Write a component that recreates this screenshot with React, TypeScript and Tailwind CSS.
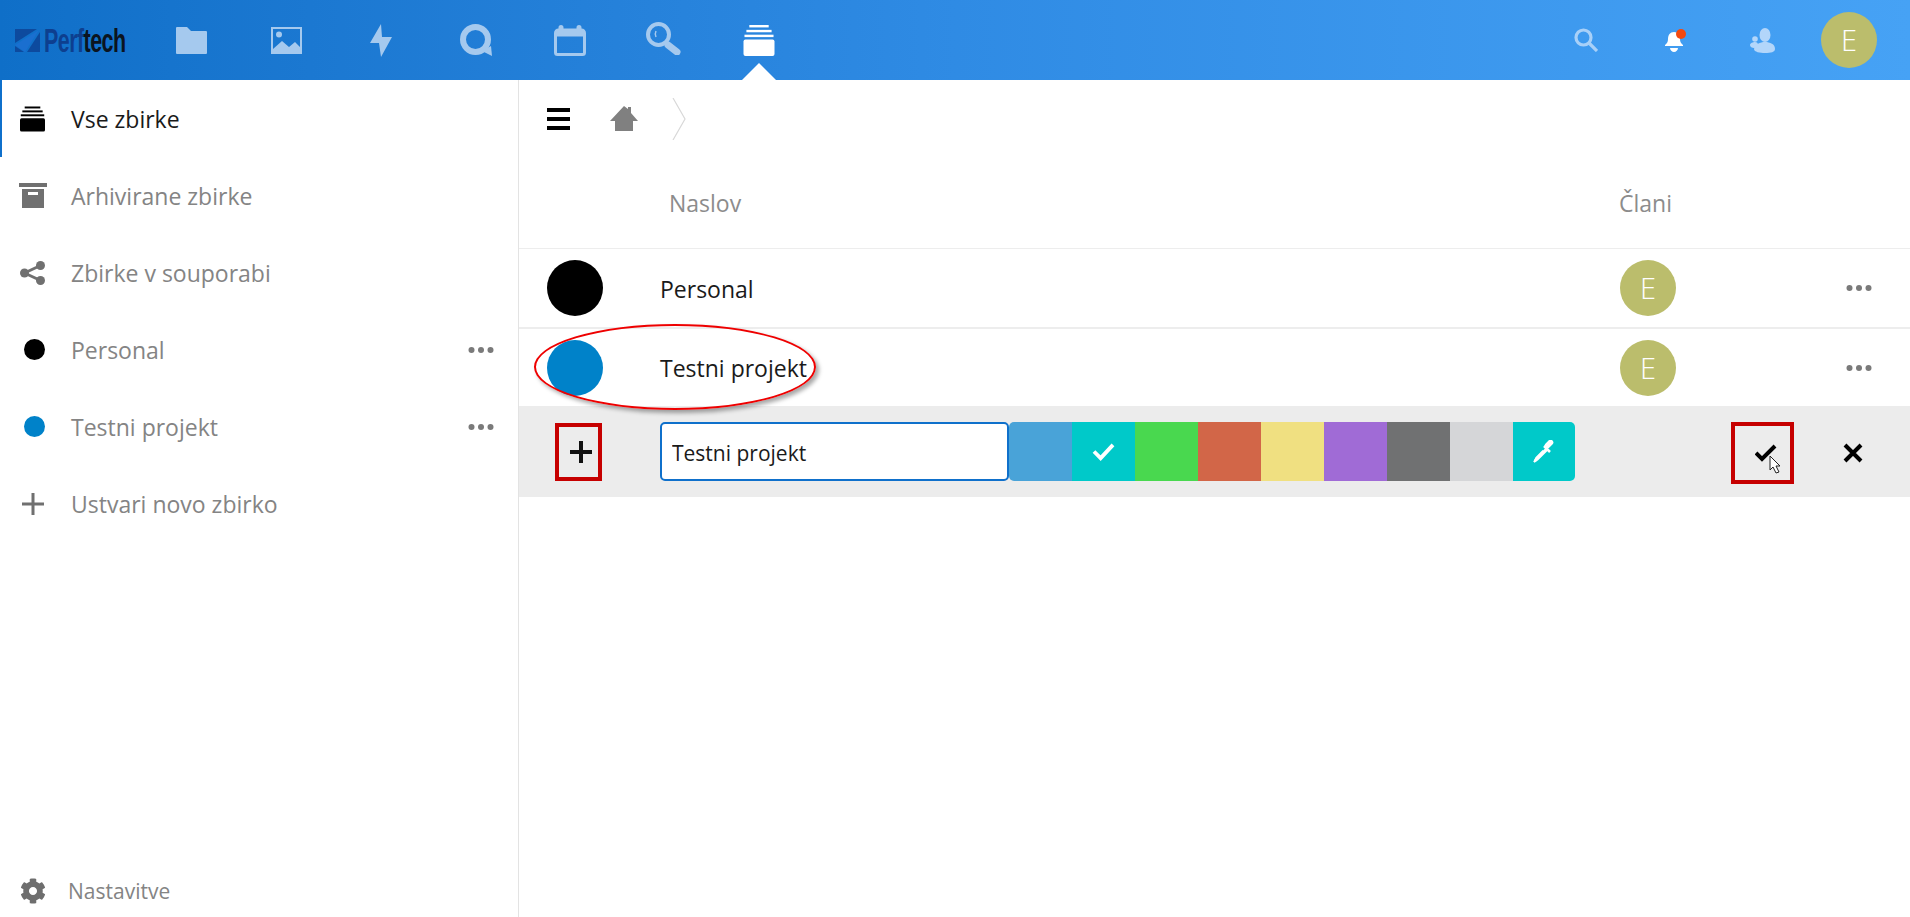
import { FaCog } from 'react-icons/fa';

const SANS = "font-['Open_Sans','Noto_Sans',sans-serif]";

function StackIcon({ className, fill }: { className: string; fill: string }) {
  return (
    <svg viewBox="0 0 32 32" className={className} fill={fill}>
      <rect x="6" y="0" width="20" height="2.5" />
      <rect x="3" y="5" width="26" height="2.5" />
      <rect x="1" y="10" width="30" height="2.5" />
      <rect x="0" y="15" width="32" height="17" rx="2" />
    </svg>
  );
}

function DotsIcon() {
  return (
    <svg viewBox="0 0 26 8" className="w-[26px] h-[8px]" fill="#7a7a7a">
      <circle cx="3.5" cy="4" r="3" />
      <circle cx="13" cy="4" r="3" />
      <circle cx="22.5" cy="4" r="3" />
    </svg>
  );
}

function Avatar() {
  return (
    <div className="w-14 h-14 rounded-full bg-[#bbbd6c] text-white flex items-center justify-center text-[29px] font-light">
      E
    </div>
  );
}

function TopBar() {
  return (
    <header className="h-20 flex items-center bg-gradient-to-r from-[#0f6fc8] via-[#2f8be4] to-[#46a2f5] relative">
      <div className="w-[176px] flex items-center pl-[15px] shrink-0">
        <svg viewBox="0 0 25 23" className="w-[25px] h-[23px]">
          <path d="M0 0h22L0 14V0z" fill="#0d4a9e" />
          <path d="M0 16L24 1 10 23 0 16z" fill="#1a6fd0" />
          <path d="M0 17l9 6H0v-6z" fill="#0d4a9e" />
          <path d="M25 3v20H12L25 3z" fill="#0d4a9e" />
        </svg>
        <span className="font-['Liberation_Sans',sans-serif] font-bold text-[33px] leading-none ml-[4px] origin-left scale-x-[0.65] text-[#0d3f8f] whitespace-nowrap tracking-tight">
          Perf<span className="text-[#0b1420]">tech</span>
        </span>
      </div>
      <svg viewBox="0 0 31 27" className="w-[31px] h-[27px] ml-0" fill="#a5c9ee">
        <path d="M1 0h10l4 4h15a1 1 0 0 1 1 1v21a1 1 0 0 1-1 1H1a1 1 0 0 1-1-1V1a1 1 0 0 1 1-1z" />
      </svg>
      <svg viewBox="0 0 31 27" className="w-[31px] h-[27px] ml-[64px]" fill="#a5c9ee">
        <path fillRule="evenodd" d="M0 0h31v27H0V0zm2 2v20l9-8 7 6 6-5 5 5V2H2z" />
        <circle cx="8" cy="7.5" r="3" />
      </svg>
      <svg viewBox="0 0 22 33" className="w-[22px] h-[33px] ml-[68px]" fill="#a5c9ee">
        <path d="M11 0L0 19h9L11 33l11-20h-10L11 0z" />
      </svg>
      <svg viewBox="0 0 32 32" className="w-[32px] h-[32px] ml-[68px]" fill="none">
        <circle cx="15.5" cy="15.5" r="12.5" stroke="#a5c9ee" strokeWidth="6" />
        <path d="M22 27l9-5 1 10z" fill="#a5c9ee" />
      </svg>
      <svg viewBox="0 0 32 31" className="w-[32px] h-[31px] ml-[62px]" fill="none" stroke="#a5c9ee">
        <path d="M1.5 8a3 3 0 0 1 3-3h23a3 3 0 0 1 3 3v19.5a2 2 0 0 1-2 2h-25a2 2 0 0 1-2-2V8z" strokeWidth="3" />
        <path d="M1.5 8.5h29" strokeWidth="6" />
        <path d="M7 2.5v5M25 2.5v5" strokeWidth="5" strokeLinecap="round" />
      </svg>
      <svg viewBox="0 0 35 33" className="w-[35px] h-[33px] ml-[60px] -mt-[4px]" fill="none">
        <circle cx="12.5" cy="12.5" r="10.5" stroke="#a5c9ee" strokeWidth="4" />
        <path d="M22 23l9 7" stroke="#a5c9ee" strokeWidth="7" strokeLinecap="round" />
        <path d="M10 9c-1 2-1 4 0 6" stroke="#a5c9ee" strokeWidth="1.5" />
      </svg>
      <StackIcon className="w-8 h-[31px] ml-[62px]" fill="#ffffff" />
      <div className="absolute left-[742px] bottom-0 w-0 h-0 border-l-[17px] border-r-[17px] border-b-[17px] border-l-transparent border-r-transparent border-b-white" />

      <div className="ml-auto flex items-center pr-[33px]">
        <svg viewBox="0 0 24 24" className="w-6 h-6 mr-[67px]" fill="none" stroke="#a8d0f8">
          <circle cx="9.5" cy="9.5" r="7.5" strokeWidth="3.2" />
          <path d="M15 15l8 8" strokeWidth="3.2" />
        </svg>
        <div className="relative w-[18px] h-[23px] mr-[67px]">
          <svg viewBox="0 0 18 23" className="w-[18px] h-[23px]" fill="#ffffff">
            <path d="M9 3c4 0 6 3 6 7 0 3 1 4 3 6v1H0v-1c2-2 3-3 3-6 0-4 2-7 6-7z" />
            <path d="M5 19h8c0 2-2 4-4 4s-4-2-4-4z" />
          </svg>
          <div className="absolute -top-[0px] -right-[3px] w-[10px] h-[10px] rounded-full bg-[#f4490f]" />
        </div>
        <svg viewBox="0 0 25 25" className="w-[25px] h-[25px] mr-[46px]" fill="#b3d6fa">
          <ellipse cx="15" cy="7" rx="5.5" ry="7" />
          <path d="M4 21c1-5 6-7 11-7s10 2 10 7c0 3-4 4-10 4-5 0-11-1-11-4z" />
          <circle cx="5" cy="11" r="2.8" />
          <path d="M0 17c0-2 3-3 5-3s3 1 3 3-2 3-4 3-4-1-4-3z" />
        </svg>
        <Avatar />
      </div>
    </header>
  );
}

function NavItem({ icon, label, active, more }: { icon: React.ReactNode; label: string; active?: boolean; more?: boolean }) {
  return (
    <div className={`h-[77px] flex items-center relative text-[23px] ${active ? 'text-[#1a1a1a]' : 'text-[#848484]'}`}>
      {active && <div className="absolute left-0 top-0 bottom-0 w-[2px] bg-[#0f70cb]" />}
      <div className="w-[71px] pl-[20px] shrink-0 flex items-center">{icon}</div>
      <span className="flex-1 pt-[2px]">{label}</span>
      {more && (
        <div className="pr-[24px]">
          <DotsIcon />
        </div>
      )}
    </div>
  );
}

function Sidebar() {
  return (
    <aside className="w-[519px] shrink-0 border-r border-[#e3e3e3] flex flex-col">
      <NavItem active label="Vse zbirke" icon={<StackIcon className="w-[25px] h-[26px]" fill="#000000" />} />
      <NavItem
        label="Arhivirane zbirke"
        icon={
          <svg viewBox="0 0 28 25" className="w-[28px] h-[25px] -ml-px">
            <rect x="0" y="0" width="28" height="4" fill="#707070" />
            <path fillRule="evenodd" d="M3 6h22v19H3V6zm6 3v3h10V9H9z" fill="#707070" />
          </svg>
        }
      />
      <NavItem
        label="Zbirke v souporabi"
        icon={
          <svg viewBox="0 0 25 24" className="w-[25px] h-[24px]" fill="#707070">
            <circle cx="20.5" cy="4.5" r="4.5" />
            <circle cx="4.5" cy="12" r="4.5" />
            <circle cx="20.5" cy="19.5" r="4.5" />
            <path d="M4.5 12L20.5 4.5M4.5 12l16 7.5" stroke="#707070" strokeWidth="3" />
          </svg>
        }
      />
      <NavItem more label="Personal" icon={<div className="w-[21px] h-[21px] ml-[4px] rounded-full bg-black" />} />
      <NavItem more label="Testni projekt" icon={<div className="w-[21px] h-[21px] ml-[4px] rounded-full bg-[#0082c9]" />} />
      <NavItem
        label="Ustvari novo zbirko"
        icon={
          <svg viewBox="0 0 22 22" className="w-[22px] h-[22px] ml-[2px]" fill="#707070">
            <path d="M9.5 0h3v9.5H22v3h-9.5V22h-3v-9.5H0v-3h9.5V0z" />
          </svg>
        }
      />
      <div className="mt-auto h-[52px] flex items-center pl-[20px] text-[21px] text-[#848484]">
        <FaCog className="w-[26px] h-[26px] text-[#6e6e6e] mr-[22px]" />
        <span className="pt-[2px]">Nastavitve</span>
      </div>
    </aside>
  );
}

function CollectionRow({ color, title, border }: { color: string; title: string; border?: boolean }) {
  return (
    <div className={`flex items-center h-[79px] pl-[28px] ${border ? 'border-t-2 border-[#ededed]' : 'border-t border-[#ededed]'}`}>
      <div className={`w-14 h-14 rounded-full shrink-0 ${color}`} />
      <div className="w-[1017px] pl-[57px] pt-[2px] shrink-0 text-[23px] text-[#1a1a1a]">{title}</div>
      <Avatar />
      <div className="ml-auto pr-[38px]">
        <DotsIcon />
      </div>
    </div>
  );
}

const SWATCHES = ['bg-[#49a3d8]', 'bg-[#00c9c9]', 'bg-[#49d84f]', 'bg-[#d26648]', 'bg-[#f0e081]', 'bg-[#a06bd6]', 'bg-[#707172]', 'bg-[#d5d6d8]'];

function EditRow() {
  return (
    <div className="h-[91px] bg-[#ececec] flex items-start pt-[16px] pl-[36px]">
      <button className="w-[47px] h-[58px] mt-px border-4 border-[#c60000] flex items-center justify-center shrink-0">
        <svg viewBox="0 0 22 22" className="w-[22px] h-[22px] ml-[4px]" fill="#111111">
          <path d="M9 0h4v9h9v4h-9v9H9v-9H0V9h9V0z" />
        </svg>
      </button>
      <input
        readOnly
        value="Testni projekt"
        className="ml-[58px] w-[349px] h-[59px] shrink-0 bg-white border-2 border-[#0f70cb] rounded-[5px] px-[10px] pt-[2px] text-[21px] text-[#1a1a1a] outline-none"
      />
      <div className="flex h-[59px] rounded-[5px] overflow-hidden shrink-0">
        {SWATCHES.map((swatch, i) => (
          <div key={swatch} className={`w-[63px] flex items-center justify-center ${swatch}`}>
            {i === 1 && (
              <svg viewBox="0 0 24 20" className="w-[23px] h-[19px]" fill="none" stroke="#ffffff" strokeWidth="4">
                <path d="M2 10l7 7L22 3" />
              </svg>
            )}
          </div>
        ))}
        <div className="w-[62px] bg-[#00c9c9] flex items-center justify-center">
          <svg viewBox="0 0 24 24" className="w-[24px] h-[24px]" fill="none" stroke="#ffffff">
            <path d="M15.5 5.5l3-3" strokeWidth="5.5" strokeLinecap="round" />
            <path d="M12 6l6 6" strokeWidth="2.5" />
            <path d="M14 9L4.5 18.5 2 22l3.5-2.5L15 10" strokeWidth="2" />
            <path d="M3 21l1.5-3 7-7" strokeWidth="2.5" />
          </svg>
        </div>
      </div>
      <button className="ml-[156px] w-[63px] h-[62px] border-4 border-[#c60000] flex items-center justify-center relative shrink-0">
        <svg viewBox="0 0 22 18" className="w-[22px] h-[18px] ml-[6px]" fill="none" stroke="#000000" strokeWidth="4">
          <path d="M1 9l6 6L20 2" />
        </svg>
        <svg viewBox="0 0 12 19" className="absolute left-[34px] top-[29px] w-[12px] h-[19px]" fill="#ffffff" stroke="#222222" strokeWidth="1">
          <path d="M1 1v14l3-3 3 6 3-1-3-6h4L1 1z" />
        </svg>
      </button>
      <div className="ml-[49px] w-[20px] h-[62px] flex items-center">
        <svg viewBox="0 0 20 20" className="w-5 h-5" fill="none" stroke="#000000" strokeWidth="4">
          <path d="M2 2l16 16M18 2L2 18" />
        </svg>
      </div>
    </div>
  );
}

export default function App() {
  return (
    <div className={`h-[917px] w-[1910px] overflow-hidden bg-white flex flex-col ${SANS}`}>
      <TopBar />
      <div className="flex flex-1 min-h-0">
        <Sidebar />
        <main className="flex-1 flex flex-col relative">
          <div className="h-[77px] flex items-center pl-[28px]">
            <svg viewBox="0 0 23 22" className="w-[23px] h-[22px]" fill="#000000">
              <rect x="0" y="0" width="23" height="4" />
              <rect x="0" y="9" width="23" height="4" />
              <rect x="0" y="18" width="23" height="4" />
            </svg>
            <svg viewBox="0 0 28 25" className="w-[28px] h-[25px] ml-[40px]" fill="#808080">
              <path d="M14 0l4 3V1h3v6l7 8h-5v10H5V15H0L14 0z" />
            </svg>
            <svg viewBox="0 0 14 42" className="w-[14px] h-[42px] ml-[34px]" fill="none" stroke="#d8d8d8" strokeWidth="1.2">
              <path d="M1 0l12 21L1 42" />
            </svg>
          </div>
          <div className="h-[91px] flex items-center text-[23px] text-[#8c8c8c] pl-[150px] pt-[2px]">
            <span className="w-[950px]">Naslov</span>
            <span>Člani</span>
          </div>
          <CollectionRow color="bg-black" title="Personal" />
          <CollectionRow border color="bg-[#0082c9]" title="Testni projekt" />
          <EditRow />
          {/* hand drawn marker round the title, lies over the row */}
          <div className="absolute left-[15px] top-[244px] w-[282px] h-[86px] rounded-[50%] border-2 border-[#ee0000] shadow-[3px_3px_4px_rgba(0,0,0,0.35)]" />
        </main>
      </div>
    </div>
  );
}
